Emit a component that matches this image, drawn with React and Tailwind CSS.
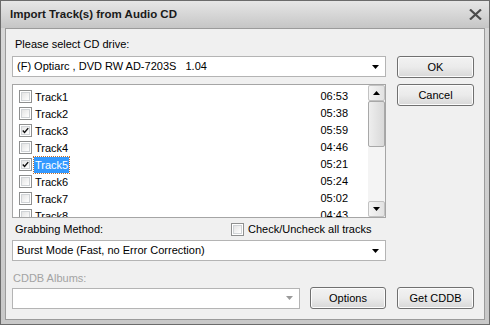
import React from 'react';

const tracks = [
  { name: 'Track1', time: '06:53', checked: false },
  { name: 'Track2', time: '05:38', checked: false },
  { name: 'Track3', time: '05:59', checked: true },
  { name: 'Track4', time: '04:46', checked: false },
  { name: 'Track5', time: '05:21', checked: true, selected: true },
  { name: 'Track6', time: '05:24', checked: false },
  { name: 'Track7', time: '05:02', checked: false },
  { name: 'Track8', time: '04:43', checked: false },
];

const CheckBox = ({ checked }) => (
  <div className="w-[13px] h-[13px] shrink-0 border border-[#8e8f8f] bg-white p-[1px]">
    <div className="w-full h-full border border-[#d0d3d6] bg-gradient-to-br from-[#e4e4e4] to-white flex items-center justify-center">
      {checked && (
        <svg width="9" height="9" viewBox="0 0 9 9">
          <path d="M1 4.5 L3.3 7 L8 1.5" stroke="#111" strokeWidth="1.8" fill="none" />
        </svg>
      )}
    </div>
  </div>
);

const Arrow = ({ color = '#000' }) => (
  <svg width="7" height="4" viewBox="0 0 7 4">
    <path d="M0 0 L7 0 L3.5 4 Z" fill={color} />
  </svg>
);

const Combo = ({ text, arrowColor, className = '' }) => (
  <div className={`h-[21px] border border-[#b4b4b4] bg-white flex items-center pl-[4px] pr-[6px] ${className}`}>
    <span className="flex-1 whitespace-pre">{text}</span>
    <Arrow color={arrowColor} />
  </div>
);

const Button = ({ children, className = '' }) => (
  <div
    className={`h-[22px] border border-[#707070] rounded-[3px] bg-gradient-to-b from-[#f2f2f2] via-[#ebebeb] to-[#d8d8d8] flex items-center justify-center shadow-[inset_0_0_0_1px_#fcfcfc] ${className}`}
  >
    {children}
  </div>
);

const ScrollBtn = ({ up }) => (
  <div className="h-[16px] border border-[#c2c2c2] rounded-[2px] bg-gradient-to-r from-[#f4f4f4] to-[#e2e2e2] flex items-center justify-center">
    <svg width="7" height="4" viewBox="0 0 7 4">
      <path d={up ? 'M0 4 L7 4 L3.5 0 Z' : 'M0 0 L7 0 L3.5 4 Z'} fill="#000" />
    </svg>
  </div>
);

export default function App() {
  return (
    <div
      className="w-[490px] h-[325px] bg-gradient-to-b from-[#d8d8d8] to-[#c8c8c8] border border-[#6b6b6b] flex flex-col text-[11px] text-black"
      style={{ fontFamily: '"Liberation Sans", Arial, sans-serif' }}
    >
      {/* title bar */}
      <div className="h-[27px] shrink-0 flex items-center pl-[9px] pr-[7px] bg-gradient-to-b from-[#e6e6e6] to-[#c6c6c6]">
        <span className="flex-1 font-bold text-[11.5px] text-[#1a1a1a]">Import Track(s) from Audio CD</span>
        <svg width="13" height="11" viewBox="0 0 13 11">
          <path d="M1 0.5 L12 10.5 M12 0.5 L1 10.5" stroke="#4a4a4a" strokeWidth="2.2" />
        </svg>
      </div>

      {/* client area */}
      <div className="mx-[4px] mb-[4px] flex-1 border border-[#9b9b9b] bg-[#f0f0f0] pl-[6px] pr-[9px] flex flex-col">
        <div className="h-[27px] pt-[8px] pl-[3px] leading-[14px]">Please select CD drive:</div>

        <div className="flex gap-[11px]">
          <div className="w-[374px] flex flex-col">
            <Combo text="(F) Optiarc , DVD RW AD-7203S   1.04" />

            <div className="mt-[7px] h-[134px] border border-[#a5a5a5] bg-white flex">
              <div className="flex-1 pt-[3px] overflow-hidden">
                {tracks.map((t) => (
                  <div key={t.name} className="h-[17px] flex items-center pl-[6px] pr-[20px] shrink-0">
                    <CheckBox checked={t.checked} />
                    <span
                      className={`ml-[2px] px-[1px] leading-[16px] ${
                        t.selected ? 'bg-[#3399ff] text-white outline outline-1 outline-dotted outline-[#c07030]' : ''
                      }`}
                    >
                      {t.name}
                    </span>
                    <span className="ml-auto">{t.time}</span>
                  </div>
                ))}
              </div>
              <div className="w-[17px] bg-[#f4f4f4] flex flex-col">
                <ScrollBtn up />
                <div className="h-[46px] border border-[#a8a8a8] rounded-[2px] bg-gradient-to-r from-[#eeeeee] to-[#d9d9d9]" />
                <div className="flex-1" />
                <ScrollBtn />
              </div>
            </div>
          </div>

          <div className="w-[77px] flex flex-col gap-[6px]">
            <Button>OK</Button>
            <Button>Cancel</Button>
          </div>
        </div>

        <div className="w-[374px] h-[22px] flex items-center whitespace-nowrap">
          <span className="pl-[3px] w-[219px] shrink-0">Grabbing Method:</span>
          <CheckBox checked={false} />
          <span className="ml-[4px]">Check/Uncheck all tracks</span>
        </div>
        <Combo className="w-[374px]" text="Burst Mode (Fast, no Error Correction)" />

        <div className="h-[26px] pt-[10px] pl-[1px] leading-[14px] text-[#a3a3a3]">CDDB Albums:</div>
        <div className="flex items-center">
          <Combo className="w-[288px]" text="" arrowColor="#9a9a9a" />
          <Button className="ml-[10px] w-[76px]">Options</Button>
          <Button className="ml-[11px] w-[77px]">Get CDDB</Button>
        </div>
      </div>
    </div>
  );
}
